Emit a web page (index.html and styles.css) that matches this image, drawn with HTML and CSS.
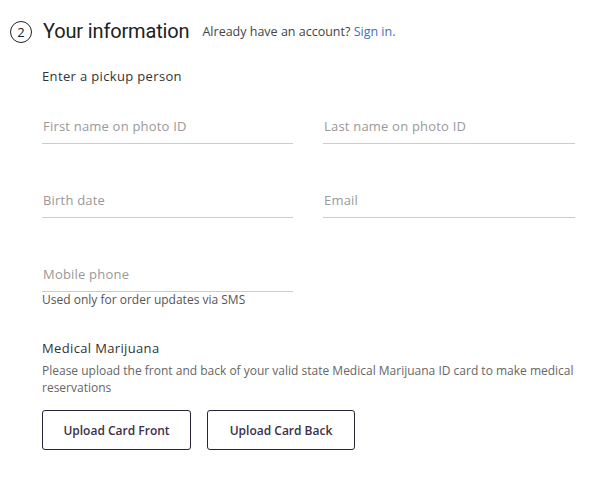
FILE: index.html
```html
<!DOCTYPE html>
<html>
<head>
<meta charset="utf-8">
<link rel="stylesheet" href="styles.css">
</head>
<body>
<div class="page">
  <div class="header">
    <span class="step">2</span>
    <h1 class="title">Your information</h1>
    <span class="account">Already have an account? <a class="signin" href="#">Sign in.</a></span>
  </div>
  <div class="form">
    <div class="label">Enter a pickup person</div>
    <div class="grid">
      <div class="field"><input class="input" placeholder="First name on photo ID"></div>
      <div class="field"><input class="input" placeholder="Last name on photo ID"></div>
      <div class="field"><input class="input" placeholder="Birth date"></div>
      <div class="field"><input class="input" placeholder="Email"></div>
      <div class="field phone"><input class="input" placeholder="Mobile phone"><div class="help">Used only for order updates via SMS</div></div>
    </div>
    <div class="medical">
      <div class="label">Medical Marijuana</div>
      <p class="desc">Please upload the front and back of your valid state Medical Marijuana ID card to make medical reservations</p>
      <div class="buttons">
        <button class="btn front">Upload Card Front</button>
        <button class="btn back">Upload Card Back</button>
      </div>
    </div>
  </div>
</div>
</body>
</html>
```
FILE: styles.css
```css
* { box-sizing: border-box; }
html, body { margin: 0; padding: 0; background: #fff; }
body { font-family: "Open Sans", "Liberation Sans", sans-serif; color: #333; }
.page { padding-top: 19px; }
.header { display: flex; align-items: center; padding-left: 10px; height: 26px; }
.step {
  width: 22px; height: 22px; border: 1px solid #222; border-radius: 50%;
  display: flex; align-items: center; justify-content: center;
  font-size: 13px; color: #222; line-height: 1;
}
.title { margin: -2px 0 0 11px; font-family: Roboto, "Open Sans", sans-serif; font-size: 20px; letter-spacing: -0.15px; font-weight: 400; color: #222; line-height: 26px; }
.account { margin-left: 13px; font-size: 12.5px; color: #444; line-height: 26px; }
.signin { color: #3a6fc4; text-decoration: none; }
.form { padding-left: 42px; width: 575px; }
.label { font-size: 13px; color: #333; line-height: 18px; letter-spacing: 0.35px; }
.form > .label { margin-top: 22px; }
.grid { display: grid; grid-template-columns: 251px 252px; column-gap: 30px; row-gap: 42px; margin-top: 27px; }
.input {
  display: block; width: 100%; height: 32px; border: none; border-bottom: 1px solid #ccc;
  padding: 0 1px 4px; font-family: inherit; font-size: 13px; letter-spacing: 0.2px; color: #333; outline: none; background: transparent;
}
.input::placeholder { color: #999; }
.help { font-size: 12px; color: #555; line-height: 16px; }
.medical { margin-top: 31px; }
.desc { margin: 5px 0 0; font-size: 12px; color: #666; line-height: 17px; }
.buttons { display: flex; gap: 16px; margin-top: 14px; }
.btn {
  height: 40px; width: 149px; border: 1px solid #2b2238; border-radius: 3px; background: #fff;
  font-family: inherit; font-size: 12px; font-weight: 600; color: #3d2e4a; padding: 0;
}
.btn.back { width: 148px; }
```
